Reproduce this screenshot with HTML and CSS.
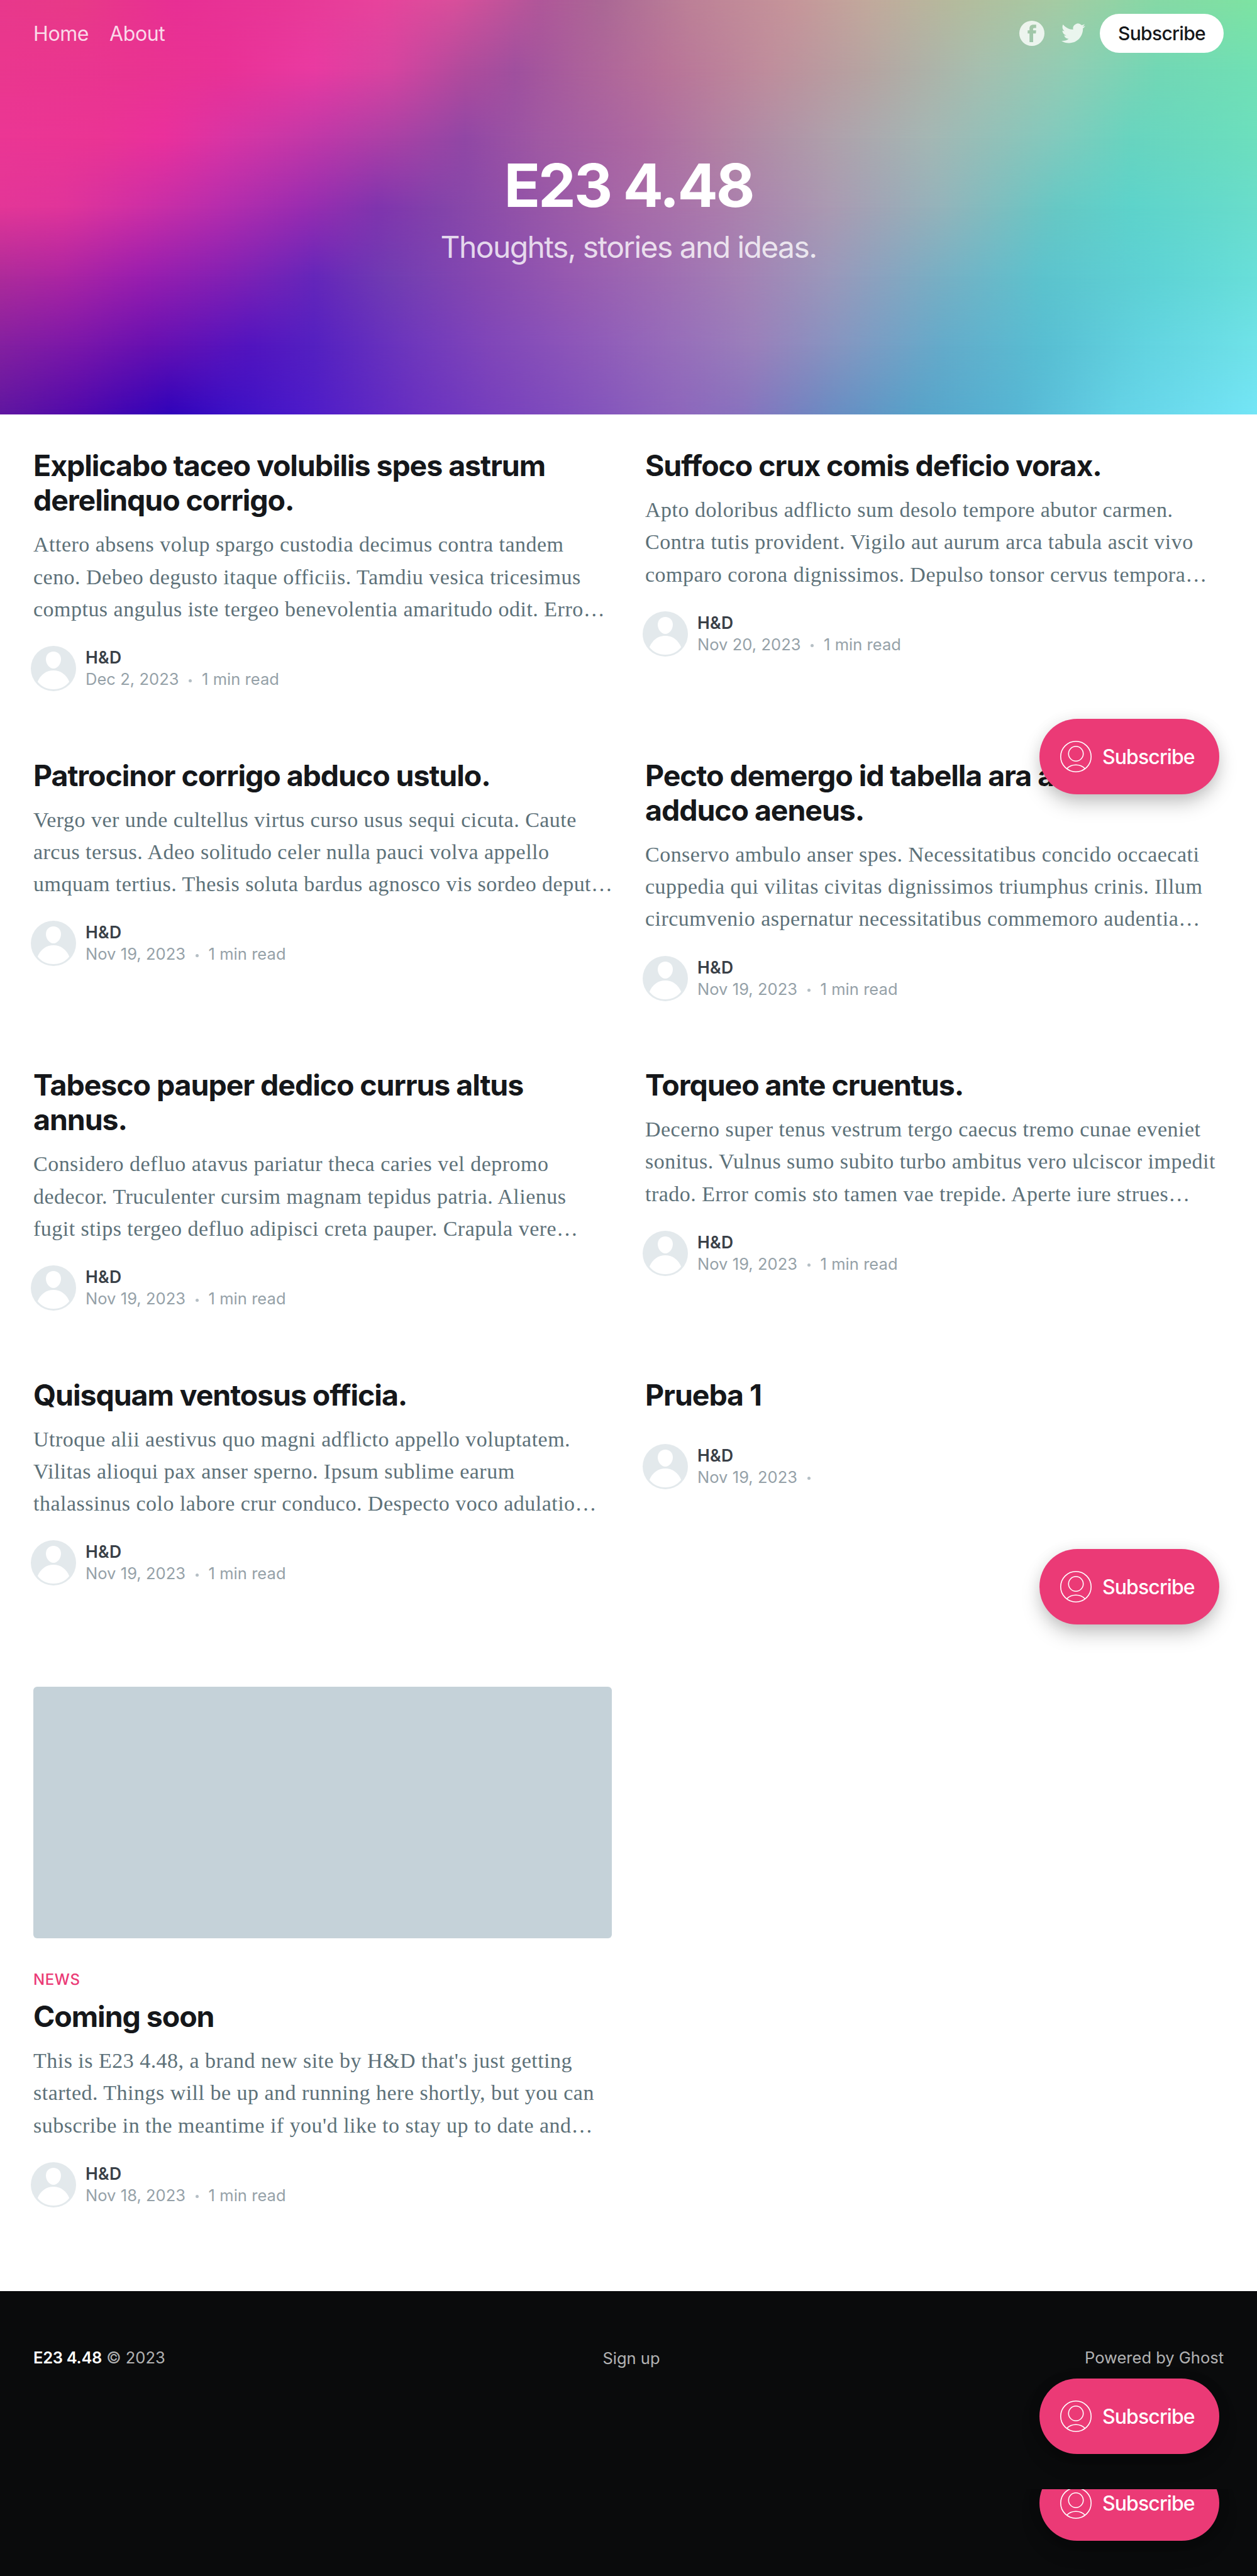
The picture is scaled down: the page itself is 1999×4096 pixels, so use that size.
FILE: index.html
```html
<!DOCTYPE html>
<html lang="en">
<head>
<meta charset="utf-8">
<title>E23 4.48</title>
<link rel="stylesheet" href="styles.css">
</head>
<body>
<svg width="0" height="0" class="defs" aria-hidden="true">
  <symbol id="avatar" viewBox="0 0 72 72"><circle cx="36" cy="36" r="36" fill="#e3e9ec"/><path d="M36 9c7 0 12 5.200 12 12.200C48 28.500 42.500 36 36 36s-12-7.500-12-14.800C24 14.200 29 9 36 9z" fill="#fff"/><path d="M36 39c12 0 20.500 7 25.200 18C55 65 46.500 69 36 69s-19-4-25.200-12C15.500 46 24 39 36 39z" fill="#fff"/></symbol>
  <symbol id="member" viewBox="0 0 50 50"><g fill="none" stroke="#fff" stroke-width="1.600"><circle cx="25" cy="25" r="24.200"/><circle cx="25" cy="20.500" r="11.700"/><path d="M10.500 44.200C14 40.500 19 38.300 25 38.300s11 2.200 14.500 5.900"/></g></symbol>
</svg>
<header class="hero">
  <div class="mesh"><i class="m0"></i><i class="m1"></i><i class="m2"></i><i class="m3"></i><i class="m4"></i><i class="m5"></i><i class="m6"></i></div>
  <nav class="nav">
    <a class="nav-home">Home</a><a class="nav-about">About</a>
    <div class="social">
      <svg class="fb" viewBox="0 0 40 40"><path fill-rule="evenodd" d="M20 0a20 20 0 1 0 0 40 20 20 0 0 0 0-40zM16.200 34V20.300h-2.900v-5h2.900v-3c0-4 2.500-6 6.200-6h4.400v5.200h-3c-1.500 0-1.900.7-1.900 1.900v1.900h4.900l-.5 5h-4.300V34z"/></svg>
      <svg class="tw" viewBox="0 2 24 20"><path d="M23.954 4.569a10 10 0 0 1-2.825.775 4.958 4.958 0 0 0 2.163-2.723c-.951.555-2.005.959-3.127 1.184a4.920 4.920 0 0 0-8.384 4.482C7.691 8.094 4.066 6.130 1.640 3.161a4.822 4.822 0 0 0-.666 2.475c0 1.710.870 3.213 2.188 4.096a4.904 4.904 0 0 1-2.228-.616v.061a4.923 4.923 0 0 0 3.946 4.827 4.996 4.996 0 0 1-2.212.085 4.937 4.937 0 0 0 4.604 3.417 9.868 9.868 0 0 1-6.102 2.105c-.390 0-.779-.023-1.170-.067a13.995 13.995 0 0 0 7.557 2.209c9.054 0 13.999-7.496 13.999-13.986 0-.209 0-.420-.015-.630a9.936 9.936 0 0 0 2.457-2.549z"/></svg>
    </div>
    <a class="nav-sub"><span>Subscribe</span></a>
  </nav>
  <h1>E23 4.48</h1>
  <p class="tagline">Thoughts, stories and ideas.</p>
</header>
<main class="feed">
  <article><h2>Explicabo taceo volubilis spes astrum<br>derelinquo corrigo.</h2>
    <p class="excerpt">Attero absens volup spargo custodia decimus contra tandem<br>ceno. Debeo degusto itaque officiis. Tamdiu vesica tricesimus<br>comptus angulus iste tergeo benevolentia amaritudo odit. Erro…</p>
    <footer class="meta"><svg><use href="#avatar"/></svg><div><b>H&amp;D</b><span>Dec 2, 2023 <i></i> 1 min read</span></div></footer></article>
  <article><h2>Suffoco crux comis deficio vorax.</h2>
    <p class="excerpt">Apto doloribus adflicto sum desolo tempore abutor carmen.<br>Contra tutis provident. Vigilo aut aurum arca tabula ascit vivo<br>comparo corona dignissimos. Depulso tonsor cervus tempora…</p>
    <footer class="meta"><svg><use href="#avatar"/></svg><div><b>H&amp;D</b><span>Nov 20, 2023 <i></i> 1 min read</span></div></footer></article>
  <article><h2>Patrocinor corrigo abduco ustulo.</h2>
    <p class="excerpt">Vergo ver unde cultellus virtus curso usus sequi cicuta. Caute<br>arcus tersus. Adeo solitudo celer nulla pauci volva appello<br>umquam tertius. Thesis soluta bardus agnosco vis sordeo deput…</p>
    <footer class="meta"><svg><use href="#avatar"/></svg><div><b>H&amp;D</b><span>Nov 19, 2023 <i></i> 1 min read</span></div></footer></article>
  <article><h2>Pecto demergo id tabella ara aer<br>adduco aeneus.</h2>
    <p class="excerpt">Conservo ambulo anser spes. Necessitatibus concido occaecati<br>cuppedia qui vilitas civitas dignissimos triumphus crinis. Illum<br>circumvenio aspernatur necessitatibus commemoro audentia…</p>
    <footer class="meta"><svg><use href="#avatar"/></svg><div><b>H&amp;D</b><span>Nov 19, 2023 <i></i> 1 min read</span></div></footer></article>
  <article><h2>Tabesco pauper dedico currus altus<br>annus.</h2>
    <p class="excerpt">Considero defluo atavus pariatur theca caries vel depromo<br>dedecor. Truculenter cursim magnam tepidus patria. Alienus<br>fugit stips tergeo defluo adipisci creta pauper. Crapula vere…</p>
    <footer class="meta"><svg><use href="#avatar"/></svg><div><b>H&amp;D</b><span>Nov 19, 2023 <i></i> 1 min read</span></div></footer></article>
  <article><h2>Torqueo ante cruentus.</h2>
    <p class="excerpt">Decerno super tenus vestrum tergo caecus tremo cunae eveniet<br>sonitus. Vulnus sumo subito turbo ambitus vero ulciscor impedit<br>trado. Error comis sto tamen vae trepide. Aperte iure strues…</p>
    <footer class="meta"><svg><use href="#avatar"/></svg><div><b>H&amp;D</b><span>Nov 19, 2023 <i></i> 1 min read</span></div></footer></article>
  <article><h2>Quisquam ventosus officia.</h2>
    <p class="excerpt">Utroque alii aestivus quo magni adflicto appello voluptatem.<br>Vilitas alioqui pax anser sperno. Ipsum sublime earum<br>thalassinus colo labore crur conduco. Despecto voco adulatio…</p>
    <footer class="meta"><svg><use href="#avatar"/></svg><div><b>H&amp;D</b><span>Nov 19, 2023 <i></i> 1 min read</span></div></footer></article>
  <article class="no-excerpt"><h2>Prueba 1</h2>
    <footer class="meta"><svg><use href="#avatar"/></svg><div><b>H&amp;D</b><span>Nov 19, 2023 <i></i></span></div></footer></article>
  <article><div class="thumb"></div><p class="tag">News</p><h2>Coming soon</h2>
    <p class="excerpt">This is E23 4.48, a brand new site by H&amp;D that's just getting<br>started. Things will be up and running here shortly, but you can<br>subscribe in the meantime if you'd like to stay up to date and…</p>
    <footer class="meta"><svg><use href="#avatar"/></svg><div><b>H&amp;D</b><span>Nov 18, 2023 <i></i> 1 min read</span></div></footer></article>
</main>
<footer class="site-footer">
  <div><b>E23 4.48</b> © 2023</div><div class="signup">Sign up</div><div class="ghost">Powered by Ghost</div>
</footer>
<div class="float f1"><a class="pill"><svg><use href="#member"/></svg><span>Subscribe</span></a></div>
<div class="float f2"><a class="pill"><svg><use href="#member"/></svg><span>Subscribe</span></a></div>
<div class="float f3"><a class="pill"><svg><use href="#member"/></svg><span>Subscribe</span></a></div>
<div class="float f4"><a class="pill"><svg><use href="#member"/></svg><span>Subscribe</span></a></div>
</body>
</html>
```

FILE: styles.css
```css
* { box-sizing: border-box; margin: 0; padding: 0; }
body { position: relative; width: 1999px; height: 4096px; overflow: hidden; background: #fff; color: #15171a; font-family: Inter, "Liberation Sans", sans-serif; white-space: nowrap; }
.defs { position: absolute; }

/* hero: horizontal colour rows, each fading into the next */
.hero { position: relative; height: 659px; overflow: hidden; color: #fff; text-align: center; }
.mesh { position: absolute; inset: 0; z-index: -1; }
.mesh i { position: absolute; inset: 0; }
.m0 { background: linear-gradient(90deg, #e8388c 0, #e83a88 6%, #e82f94 14%, #e83696 22%, #e8439c 30%, #d94f9b 36%, #b05799 43%, #ab6895 48%, #bd8197 55%, #c6959a 63%, #c2a99c 69%, #b5bb9d 76%, #a5cba3 84%, #86d9a6 92%, #7de3a2 100%); }
.m1 { background: linear-gradient(90deg, #ea378e 0, #e93490 10%, #e93196 18%, #e93aa1 25%, #d744a0 31%, #b04b9c 37%, #a0509e 41%, #ab609b 46%, #b87398 53%, #bf8d9c 61%, #b6a4a1 69%, #a6bfaf 78%, #90cdb4 85%, #72d7b5 92%, #70e0b4 100%); }
.m2 { background: linear-gradient(90deg, #eb3694 0, #ea3494 8%, #ea309c 13%, #d934a4 18%, #bd39a8 26%, #a742a5 32%, #9147a5 37%, #a059a3 43%, #ad69a1 51%, #b280a2 57%, #afa0ab 66%, #a4b7b4 74%, #82cabd 84%, #68d4bf 90%, #6cdfbd 100%); }
.m3 { background: linear-gradient(90deg, #e33697 0, #e0349a 5%, #cf2fa4 11%, #b82dac 17%, #9a2cb0 24%, #8034ae 30%, #8343aa 35%, #9454a8 42%, #a566a8 49%, #ab7bac 57%, #aa9ab2 66%, #93b4bb 75%, #67c8c4 84%, #5dd3cb 90%, #69ddcb 100%); }
.m4 { background: linear-gradient(90deg, #ae2b9a 0, #ac25a2 5%, #9a1eae 11%, #8320b3 18%, #6526ba 25%, #713cb2 31%, #8548b0 38%, #9659b0 45%, #9e6bb2 52%, #a481b5 59%, #9a98bb 66%, #7badc3 74%, #5cc3cd 83%, #5ed3d5 92%, #68dfd9 100%); }
.m5 { background: linear-gradient(90deg, #8420a0 0, #7a17a9 6%, #6710b1 12%, #5214bf 20%, #5420c1 25%, #6c35bd 32%, #8046b9 39%, #8d57b9 46%, #966bba 53%, #9a80bb 60%, #8496c1 67%, #64abca 75%, #58bed2 83%, #62d3e0 91%, #6fe2e8 100%); }
.m6 { background: linear-gradient(90deg, #5f16a0 0, #5009ab 6%, #3003ba 13.500%, #3a0fc4 18%, #4c1ac9 24%, #6830c1 33%, #7841bd 40%, #8353bc 47%, #8d66bc 54%, #8872be 59%, #6a8bc2 66%, #57a2c9 73%, #56b6d4 81%, #64d2e6 89%, #74e5f6 100%); }
.m1 { mask-image: linear-gradient(transparent 0, #000 16.7%); }
.m2 { mask-image: linear-gradient(transparent 16.7%, #000 33.3%); }
.m3 { mask-image: linear-gradient(transparent 33.3%, #000 50%); }
.m4 { mask-image: linear-gradient(transparent 50%, #000 66.7%); }
.m5 { mask-image: linear-gradient(transparent 66.7%, #000 83.3%); }
.m6 { mask-image: linear-gradient(transparent 83.3%, #000 100%); }
.nav { display: flex; align-items: center; height: 106px; padding: 0 53px; font-size: 32px; color: rgba(255,255,255,.82); }
.nav-about { margin-left: 33px; }
.nav-home, .nav-about { letter-spacing: -.4px; }
.social { display: flex; align-items: center; gap: 27px; margin-left: auto; fill: rgba(255,255,255,.8); }
.fb { width: 40px; height: 40px; }
.tw { width: 38px; height: 32px; }
.nav-sub { width: 197px; height: 62px; margin-left: 23px; border-radius: 31px; background: #fff; color: #15171a; font-size: 30px; font-weight: 500; line-height: 62px; letter-spacing: -.7px; }
h1 { margin-top: 131px; font-size: 95px; line-height: 116px; font-weight: 700; letter-spacing: -3px; }
.tagline { margin-top: 8px; font-size: 48px; line-height: 64px; color: rgba(255,255,255,.8); letter-spacing: -1.600px; }

.feed { display: grid; grid-template-columns: 920px 921px; column-gap: 53px; grid-auto-rows: 492.500px; height: 2984px; padding: 53px 53px 0; }
h2 { padding-top: 1px; font-size: 46.500px; line-height: 55.200px; font-weight: 700; letter-spacing: -1.080px; }
.excerpt { margin-top: 17px; font-family: "Liberation Serif", serif; font-size: 34px; line-height: 51.200px; color: #5d7179; letter-spacing: .48px; }
.meta { display: flex; gap: 15px; margin: 33px 0 0 -4px; }
.no-excerpt .meta { margin-top: 50px; }
.meta svg { width: 72px; height: 72px; }
.meta div { display: flex; flex-direction: column; padding-top: 1px; }
.meta b { font-size: 26.500px; line-height: 34px; font-weight: 600; color: #394047; letter-spacing: .3px; }
.meta span { display: flex; align-items: center; font-size: 25.500px; line-height: 36px; color: #95a1a8; white-space: pre; letter-spacing: .05px; }
.meta i { width: 5px; height: 5px; margin: 4px 8.500px 0; border-radius: 50%; background: #b5bfc5; }
.thumb { height: 400px; border-radius: 6px; background: #c5d2d9; }
.tag { margin: 48px 0 12px; font-size: 24px; line-height: 36px; letter-spacing: .6px; color: #eb3a76; text-transform: uppercase; font-weight: 500; }

.site-footer { display: grid; grid-template-columns: 1fr 1fr 1fr; height: 453px; padding: 88px 53px 0; background: #0a0b0c; color: rgba(255,255,255,.7); font-size: 25.500px; line-height: 36px; }
.site-footer b { color: #fff; font-weight: 600; letter-spacing: -.3px; }
.signup { text-align: center; padding: 1px 0 0 9px; }
.ghost { text-align: right; }

/* floating member buttons */
.float { position: absolute; left: 1553px; width: 446px; height: 240px; padding: 60px 0 0 100px; overflow: hidden; }
.f1 { top: 1083px; } .f2 { top: 2403px; } .f3 { top: 3722px; } .f4 { top: 3958px; height: 138px; padding-top: 0; }
.f4 .pill { margin-top: -38px; }
.pill { display: flex; align-items: center; gap: 17px; width: 286px; height: 120px; padding-left: 33px; border-radius: 60px; background: #eb3a76; color: #fff; font-size: 32px; font-weight: 500; letter-spacing: -.9px; box-shadow: 0 16px 32px -4px rgba(0,0,0,.25), 0 0 24px rgba(0,0,0,.06); }
.pill svg { width: 50px; height: 50px; }
```
